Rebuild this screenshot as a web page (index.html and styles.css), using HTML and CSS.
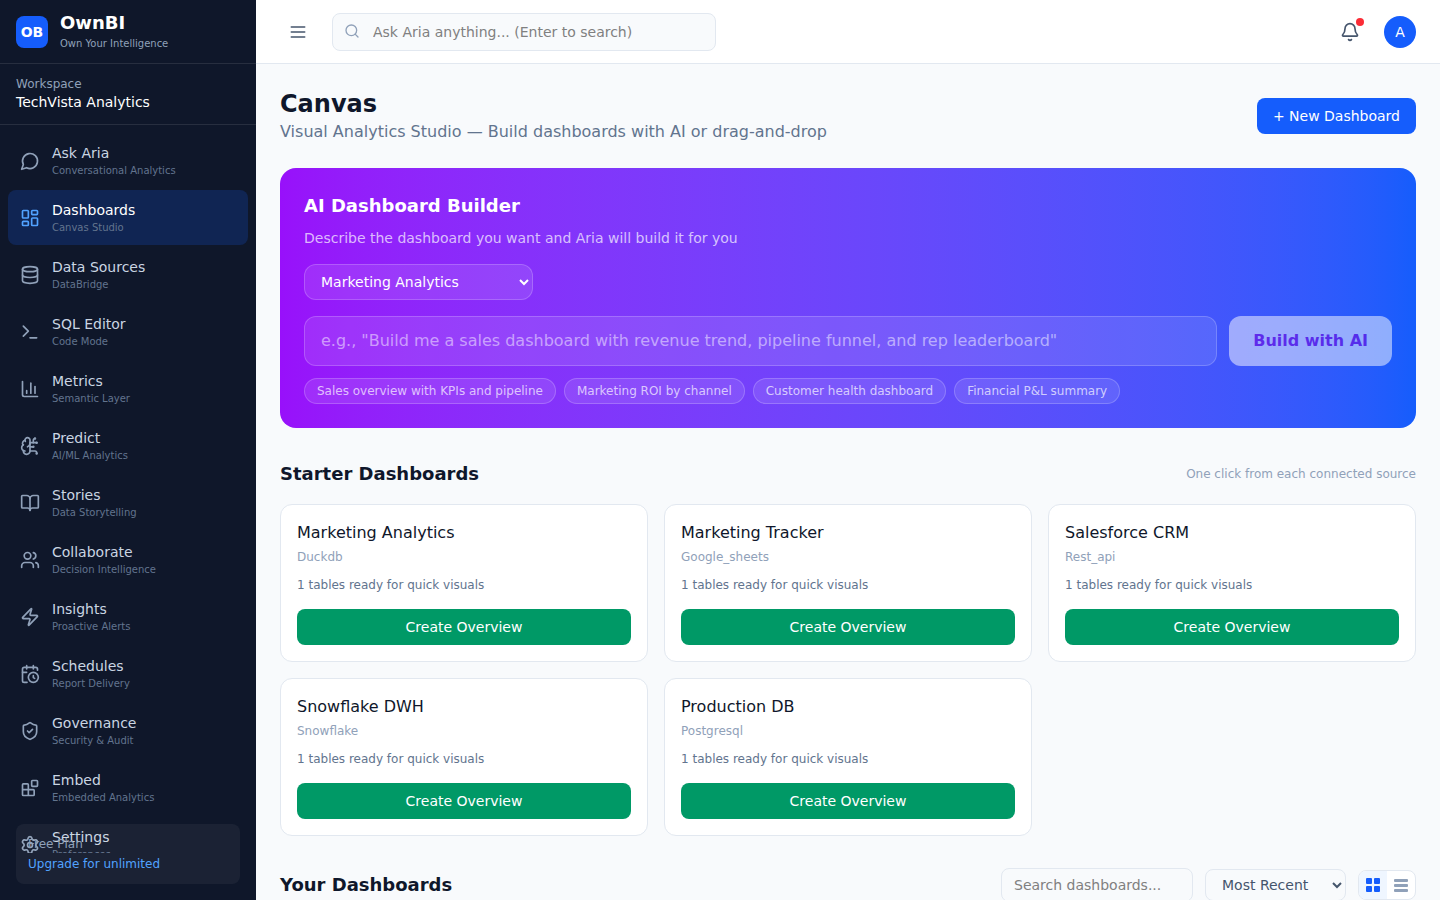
FILE: index.html
```html
<!DOCTYPE html>
<html lang="en">
<head>
<meta charset="utf-8">
<title>OwnBI – Canvas</title>
<link rel="stylesheet" href="styles.css">
</head>
<body>
<div class="app">
  <aside class="sidebar">
    <div class="brand">
      <div class="brand-mark">OB</div>
      <div>
        <div class="brand-name">OwnBI</div>
        <div class="brand-tag">Own Your Intelligence</div>
      </div>
    </div>
    <div class="workspace">
      <div class="workspace-label">Workspace</div>
      <div class="workspace-name">TechVista Analytics</div>
    </div>
    <nav class="nav">
      <a class="nav-item" href="#"><svg class="icon" viewBox="0 0 24 24"><path d="M7.9 20A9 9 0 1 0 4 16.1L2 22Z"/></svg><span><span class="nav-title">Ask Aria</span><span class="nav-sub">Conversational Analytics</span></span></a>
      <a class="nav-item active" href="#" aria-current="page"><svg class="icon" viewBox="0 0 24 24"><rect width="7" height="9" x="3" y="3" rx="1"/><rect width="7" height="5" x="14" y="3" rx="1"/><rect width="7" height="9" x="14" y="12" rx="1"/><rect width="7" height="5" x="3" y="16" rx="1"/></svg><span><span class="nav-title">Dashboards</span><span class="nav-sub">Canvas Studio</span></span></a>
      <a class="nav-item" href="#"><svg class="icon" viewBox="0 0 24 24"><ellipse cx="12" cy="5" rx="9" ry="3"/><path d="M3 5V19A9 3 0 0 0 21 19V5"/><path d="M3 12A9 3 0 0 0 21 12"/></svg><span><span class="nav-title">Data Sources</span><span class="nav-sub">DataBridge</span></span></a>
      <a class="nav-item" href="#"><svg class="icon" viewBox="0 0 24 24"><path d="M12 19h8"/><path d="m4 17 6-6-6-6"/></svg><span><span class="nav-title">SQL Editor</span><span class="nav-sub">Code Mode</span></span></a>
      <a class="nav-item" href="#"><svg class="icon" viewBox="0 0 24 24"><path d="M3 3v16a2 2 0 0 0 2 2h16"/><path d="M18 17V9"/><path d="M13 17V5"/><path d="M8 17v-3"/></svg><span><span class="nav-title">Metrics</span><span class="nav-sub">Semantic Layer</span></span></a>
      <a class="nav-item" href="#"><svg class="icon" viewBox="0 0 24 24"><path d="M12 5a3 3 0 1 0-5.997.125 4 4 0 0 0-2.526 5.77 4 4 0 0 0 .556 6.588A4 4 0 1 0 12 18Z"/><path d="M9 13a4.500 4.500 0 0 0 3-4"/><path d="M6.003 5.125A3 3 0 0 0 6.401 6.500"/><path d="M3.477 10.896a4 4 0 0 1 .585-.396"/><path d="M6 18a4 4 0 0 1-1.967-.516"/><path d="M12 13h4"/><path d="M12 18h6a2 2 0 0 1 2 2v1"/><path d="M12 8h8"/><path d="M16 8V5a2 2 0 0 1 2-2"/><circle cx="16" cy="13" r=".5"/><circle cx="18" cy="3" r=".5"/><circle cx="20" cy="21" r=".5"/><circle cx="20" cy="8" r=".5"/></svg><span><span class="nav-title">Predict</span><span class="nav-sub">AI/ML Analytics</span></span></a>
      <a class="nav-item" href="#"><svg class="icon" viewBox="0 0 24 24"><path d="M12 7v14"/><path d="M3 18a1 1 0 0 1-1-1V4a1 1 0 0 1 1-1h5a4 4 0 0 1 4 4 4 4 0 0 1 4-4h5a1 1 0 0 1 1 1v13a1 1 0 0 1-1 1h-6a3 3 0 0 0-3 3 3 3 0 0 0-3-3z"/></svg><span><span class="nav-title">Stories</span><span class="nav-sub">Data Storytelling</span></span></a>
      <a class="nav-item" href="#"><svg class="icon" viewBox="0 0 24 24"><path d="M16 21v-2a4 4 0 0 0-4-4H6a4 4 0 0 0-4 4v2"/><path d="M16 3.128a4 4 0 0 1 0 7.744"/><path d="M22 21v-2a4 4 0 0 0-3-3.870"/><circle cx="9" cy="7" r="4"/></svg><span><span class="nav-title">Collaborate</span><span class="nav-sub">Decision Intelligence</span></span></a>
      <a class="nav-item" href="#"><svg class="icon" viewBox="0 0 24 24"><path d="M4 14a1 1 0 0 1-.78-1.630l9.900-10.200a.5.5 0 0 1 .86.460l-1.920 6.020A1 1 0 0 0 13 10h7a1 1 0 0 1 .78 1.630l-9.900 10.200a.5.5 0 0 1-.86-.46l1.920-6.020A1 1 0 0 0 11 14z"/></svg><span><span class="nav-title">Insights</span><span class="nav-sub">Proactive Alerts</span></span></a>
      <a class="nav-item" href="#"><svg class="icon" viewBox="0 0 24 24"><path d="M16 14v2.200l1.600 1"/><path d="M16 2v4"/><path d="M21 7.500V6a2 2 0 0 0-2-2H5a2 2 0 0 0-2 2v14a2 2 0 0 0 2 2h3.500"/><path d="M3 10h5"/><path d="M8 2v4"/><circle cx="16" cy="16" r="6"/></svg><span><span class="nav-title">Schedules</span><span class="nav-sub">Report Delivery</span></span></a>
      <a class="nav-item" href="#"><svg class="icon" viewBox="0 0 24 24"><path d="M20 13c0 5-3.500 7.500-7.660 8.950a1 1 0 0 1-.67-.01C7.500 20.500 4 18 4 13V6a1 1 0 0 1 1-1c2 0 4.500-1.200 6.240-2.720a1.170 1.170 0 0 1 1.520 0C14.510 3.810 17 5 19 5a1 1 0 0 1 1 1z"/><path d="m9 12 2 2 4-4"/></svg><span><span class="nav-title">Governance</span><span class="nav-sub">Security &amp; Audit</span></span></a>
      <a class="nav-item" href="#"><svg class="icon" viewBox="0 0 24 24"><rect width="7" height="7" x="14" y="3" rx="1"/><path d="M10 21V8a1 1 0 0 0-1-1H4a1 1 0 0 0-1 1v12a1 1 0 0 0 1 1h12a1 1 0 0 0 1-1v-5a1 1 0 0 0-1-1H3"/></svg><span><span class="nav-title">Embed</span><span class="nav-sub">Embedded Analytics</span></span></a>
      <a class="nav-item" href="#"><svg class="icon" viewBox="0 0 24 24"><path d="M9.671 4.136a2.340 2.340 0 0 1 4.659 0 2.340 2.340 0 0 0 3.319 1.915 2.340 2.340 0 0 1 2.330 4.033 2.340 2.340 0 0 0 0 3.831 2.340 2.340 0 0 1-2.330 4.033 2.340 2.340 0 0 0-3.319 1.915 2.340 2.340 0 0 1-4.659 0 2.340 2.340 0 0 0-3.320-1.915 2.340 2.340 0 0 1-2.330-4.033 2.340 2.340 0 0 0 0-3.831A2.340 2.340 0 0 1 6.350 6.051a2.340 2.340 0 0 0 3.319-1.915"/><circle cx="12" cy="12" r="3"/></svg><span><span class="nav-title">Settings</span><span class="nav-sub">Preferences</span></span></a>
    </nav>
    <div class="plan">
      <div class="plan-name">Free Plan</div>
      <a class="plan-link" href="#">Upgrade for unlimited</a>
    </div>
  </aside>

  <div class="content">
    <header class="topbar">
      <button class="icon-button" type="button" aria-label="Toggle menu"><svg class="icon menu-icon" viewBox="0 0 24 24"><path d="M4 6h16M4 12h16M4 18h16"/></svg></button>
      <div class="search">
        <svg class="icon search-icon" viewBox="0 0 24 24"><path d="m21 21-4.340-4.340"/><circle cx="11" cy="11" r="8"/></svg>
        <input class="search-input" type="text" aria-label="Ask Aria" placeholder="Ask Aria anything... (Enter to search)">
      </div>
      <div class="topbar-right">
        <button class="icon-button bell" type="button" aria-label="Notifications"><svg class="icon" viewBox="0 0 24 24"><path d="M10.268 21a2 2 0 0 0 3.464 0"/><path d="M3.262 15.326A1 1 0 0 0 4 17h16a1 1 0 0 0 .74-1.673C19.410 13.956 18 12.499 18 8A6 6 0 0 0 6 8c0 4.499-1.411 5.956-2.738 7.326"/></svg><span class="bell-dot"></span></button>
        <button class="avatar" type="button" aria-label="Account">A</button>
      </div>
    </header>

    <main class="main">
      <div class="row">
        <div>
          <h1 class="page-title">Canvas</h1>
          <p class="page-sub">Visual Analytics Studio — Build dashboards with AI or drag-and-drop</p>
        </div>
        <button class="primary" type="button">+ New Dashboard</button>
      </div>

      <section class="builder">
        <h2 class="builder-title">AI Dashboard Builder</h2>
        <p class="builder-sub">Describe the dashboard you want and Aria will build it for you</p>
        <select class="builder-select" aria-label="Data source">
          <option>Marketing Analytics</option>
          <option>Marketing Tracker</option>
          <option>Salesforce CRM</option>
          <option>Snowflake DWH</option>
          <option>Production DB</option>
        </select>
        <div class="builder-row">
          <input class="builder-input" type="text" aria-label="Dashboard description" placeholder="e.g., &quot;Build me a sales dashboard with revenue trend, pipeline funnel, and rep leaderboard&quot;">
          <button class="build" type="button" disabled>Build with AI</button>
        </div>
        <div class="chips">
          <button class="chip" type="button">Sales overview with KPIs and pipeline</button>
          <button class="chip" type="button">Marketing ROI by channel</button>
          <button class="chip" type="button">Customer health dashboard</button>
          <button class="chip" type="button">Financial P&amp;L summary</button>
        </div>
      </section>

      <section class="starters">
        <div class="row">
          <h2 class="section-title">Starter Dashboards</h2>
          <span class="section-note">One click from each connected source</span>
        </div>
        <div class="cards">
          <article class="card"><h3 class="card-title">Marketing Analytics</h3><p class="card-kind">Duckdb</p><p class="card-text">1 tables ready for quick visuals</p><button class="create" type="button">Create Overview</button></article>
          <article class="card"><h3 class="card-title">Marketing Tracker</h3><p class="card-kind">Google_sheets</p><p class="card-text">1 tables ready for quick visuals</p><button class="create" type="button">Create Overview</button></article>
          <article class="card"><h3 class="card-title">Salesforce CRM</h3><p class="card-kind">Rest_api</p><p class="card-text">1 tables ready for quick visuals</p><button class="create" type="button">Create Overview</button></article>
          <article class="card"><h3 class="card-title">Snowflake DWH</h3><p class="card-kind">Snowflake</p><p class="card-text">1 tables ready for quick visuals</p><button class="create" type="button">Create Overview</button></article>
          <article class="card"><h3 class="card-title">Production DB</h3><p class="card-kind">Postgresql</p><p class="card-text">1 tables ready for quick visuals</p><button class="create" type="button">Create Overview</button></article>
        </div>
      </section>

      <section class="row">
        <h2 class="section-title">Your Dashboards</h2>
        <div class="filters">
          <input class="filter-input" type="text" aria-label="Search dashboards" placeholder="Search dashboards...">
          <select class="filter-select" aria-label="Sort by"><option>Most Recent</option><option>Name</option></select>
          <div class="toggle">
            <button class="toggle-button on" type="button" aria-label="Grid view"><svg class="toggle-icon" viewBox="0 0 14 14"><rect width="6" height="6" rx="1"/><rect x="8" width="6" height="6" rx="1"/><rect y="8" width="6" height="6" rx="1"/><rect x="8" y="8" width="6" height="6" rx="1"/></svg></button>
            <button class="toggle-button" type="button" aria-label="List view"><svg class="toggle-icon" viewBox="0 0 14 14"><rect y="1" width="14" height="3" rx="1"/><rect y="6" width="14" height="3" rx="1"/><rect y="11" width="14" height="3" rx="1"/></svg></button>
          </div>
        </div>
      </section>
    </main>
  </div>
</div>
</body>
</html>
```

FILE: styles.css
```css
*, *::before, *::after { box-sizing: border-box; }
body, h1, h2, h3, p { margin: 0; }
body {
  font-family: "DejaVu Sans", sans-serif;
  font-size: 16px;
  line-height: 24px;
  color: #0f172b;
  background: #f8fafc;
}
button, input, select { font: inherit; color: inherit; margin: 0; }
button { border: 0; padding: 0; background: none; cursor: pointer; }
a { color: inherit; text-decoration: none; }

.icon {
  width: 20px;
  height: 20px;
  flex: none;
  fill: none;
  stroke: currentColor;
  stroke-width: 2;
  stroke-linecap: round;
  stroke-linejoin: round;
}

.app { display: flex; height: 100vh; overflow: hidden; }

.sidebar {
  position: relative;
  width: 256px;
  flex: none;
  display: flex;
  flex-direction: column;
  background: #0f172a;
  color: #fff;
}
.brand {
  display: flex;
  align-items: center;
  gap: 12px;
  height: 64px;
  flex: none;
  padding: 0 16px;
  border-bottom: 1px solid rgba(255, 255, 255, 0.1);
}
.brand-mark {
  display: grid;
  place-items: center;
  width: 32px;
  height: 32px;
  border-radius: 8px;
  background: #155dfc;
  font-size: 14px;
  font-weight: 700;
}
.brand-name { font-size: 18px; line-height: 24px; font-weight: 700; }
.brand-tag { font-size: 10px; line-height: 17px; color: #90a1b9; }
.workspace {
  flex: none;
  padding: 12px 16px;
  border-bottom: 1px solid rgba(255, 255, 255, 0.1);
}
.workspace-label { font-size: 12px; line-height: 16px; color: #90a1b9; }
.workspace-name { font-size: 14px; line-height: 20px; }

.nav {
  display: flex;
  flex-direction: column;
  gap: 2px;
  flex: 1;
  min-height: 0;
  margin-bottom: 47px;
  padding: 8px;
  overflow: hidden;
}
.nav-item {
  display: flex;
  align-items: center;
  gap: 12px;
  flex: none;
  padding: 10px 12px;
  border-radius: 8px;
  color: #90a1b9;
}
.nav-title { display: block; font-size: 14px; line-height: 20px; color: #cad5e2; }
.nav-sub { display: block; font-size: 10px; line-height: 15px; color: #62748e; }
.active { background: rgba(21, 93, 252, 0.2); color: #51a2ff; }
.active .nav-title { color: #fff; }

.plan {
  position: absolute;
  left: 16px;
  right: 16px;
  bottom: 16px;
  padding: 12px;
  border-radius: 8px;
  background: rgba(255, 255, 255, 0.05);
  font-size: 12px;
  line-height: 16px;
}
.plan-name { color: #90a1b9; }
.plan-link { display: block; margin-top: 4px; color: #51a2ff; }

.content { flex: 1; min-width: 0; display: flex; flex-direction: column; }
.topbar {
  display: flex;
  align-items: center;
  gap: 16px;
  height: 64px;
  flex: none;
  padding: 0 24px;
  background: #fff;
  border-bottom: 1px solid #e2e8f0;
}
.icon-button { position: relative; padding: 8px; color: #45556c; }
.icon-button .icon { display: block; }
.search { position: relative; width: 384px; }
.search-icon { position: absolute; left: 12px; top: 10px; width: 16px; height: 16px; color: #90a1b9; }
.search-input {
  display: block;
  width: 100%;
  height: 38px;
  padding: 0 16px 0 40px;
  border: 1px solid #e2e8f0;
  border-radius: 8px;
  background: #f8fafc;
  font-size: 14px;
}
.search-input::placeholder, .filter-input::placeholder { color: #808080; }
.topbar-right { display: flex; align-items: center; gap: 16px; margin-left: auto; }
.bell-dot {
  position: absolute;
  top: 4px;
  right: 4px;
  width: 8px;
  height: 8px;
  border-radius: 50%;
  background: #fb2c36;
}
.avatar {
  width: 32px;
  height: 32px;
  border-radius: 50%;
  background: #155dfc;
  color: #fff;
  font-size: 14px;
}

.main {
  display: flex;
  flex-direction: column;
  gap: 24px;
  flex: 1;
  min-height: 0;
  padding: 24px;
  overflow: hidden;
}
.main > * { flex: none; }
.row { display: flex; align-items: center; justify-content: space-between; }
.page-title { font-size: 24px; line-height: 32px; font-weight: 700; }
.page-sub { color: #62748e; }
.primary {
  padding: 8px 16px;
  border-radius: 8px;
  background: #155dfc;
  color: #fff;
  font-size: 14px;
  line-height: 20px;
}

.builder {
  padding: 24px;
  border-radius: 16px;
  background: linear-gradient(to right in oklab, #9810fa, #155dfc);
  color: #fff;
}
.builder-title { margin-bottom: 8px; font-size: 18px; line-height: 28px; font-weight: 700; }
.builder-sub { margin-bottom: 16px; font-size: 14px; line-height: 20px; color: rgba(255, 255, 255, 0.7); }
.builder-select {
  display: block;
  width: 229px;
  height: 36px;
  margin-bottom: 16px;
  padding: 0 0 0 12px;
  border: 1px solid rgba(255, 255, 255, 0.2);
  border-radius: 12px;
  background: rgba(255, 255, 255, 0.1);
  color: #fff;
  font-size: 14px;
}
.builder-select option { color: #0f172b; }
.builder-row { display: flex; gap: 12px; margin-bottom: 12px; }
.builder-input {
  flex: 1;
  min-width: 0;
  padding: 12px 16px;
  line-height: 24px;
  border: 1px solid rgba(255, 255, 255, 0.2);
  border-radius: 12px;
  background: rgba(255, 255, 255, 0.1);
}
.builder-input::placeholder { color: rgba(255, 255, 255, 0.5); }
.build {
  padding: 0 24px;
  border-radius: 12px;
  background: #fff;
  color: #8200db;
  font-weight: 700;
  opacity: 0.5;
}
.chips { display: flex; flex-wrap: wrap; gap: 8px; }
.chip {
  padding: 4px 12px;
  border: 1px solid rgba(255, 255, 255, 0.2);
  border-radius: 13px;
  background: rgba(255, 255, 255, 0.1);
  color: rgba(255, 255, 255, 0.7);
  font-size: 12px;
  line-height: 16px;
}

.starters { margin: 8px 0; }
.section-title { font-size: 18px; line-height: 28px; font-weight: 700; }
.section-note { font-size: 12px; line-height: 16px; color: #90a1b9; }
.cards { display: grid; grid-template-columns: repeat(3, 1fr); gap: 16px; margin-top: 16px; }
.card { padding: 16px; border: 1px solid #e2e8f0; border-radius: 12px; background: #fff; }
.card-title { font-size: 16px; line-height: 24px; font-weight: 400; }
.card-kind { margin-top: 4px; font-size: 12px; line-height: 16px; color: #90a1b9; }
.card-text { margin: 12px 0 16px; font-size: 12px; line-height: 16px; color: #62748e; }
.create {
  display: block;
  width: 100%;
  padding: 8px;
  border-radius: 8px;
  background: #009966;
  color: #fff;
  font-size: 14px;
  line-height: 20px;
}

.filters { display: flex; align-items: center; gap: 12px; font-size: 14px; }
.filter-input, .filter-select { border: 1px solid #e2e8f0; border-radius: 8px; background: #f8fafc; }
.filter-input { width: 192px; height: 34px; padding: 0 12px; }
.filter-select { width: 141px; height: 32px; padding: 0 0 0 12px; color: #45556c; }
.toggle {
  display: flex;
  overflow: hidden;
  border: 1px solid #e2e8f0;
  border-radius: 8px;
  background: #fff;
}
.toggle-button { padding: 7px; color: #90a1b9; }
.toggle-icon { display: block; width: 14px; height: 14px; fill: currentColor; }
.on { background: #eff6ff; color: #155dfc; }
```
